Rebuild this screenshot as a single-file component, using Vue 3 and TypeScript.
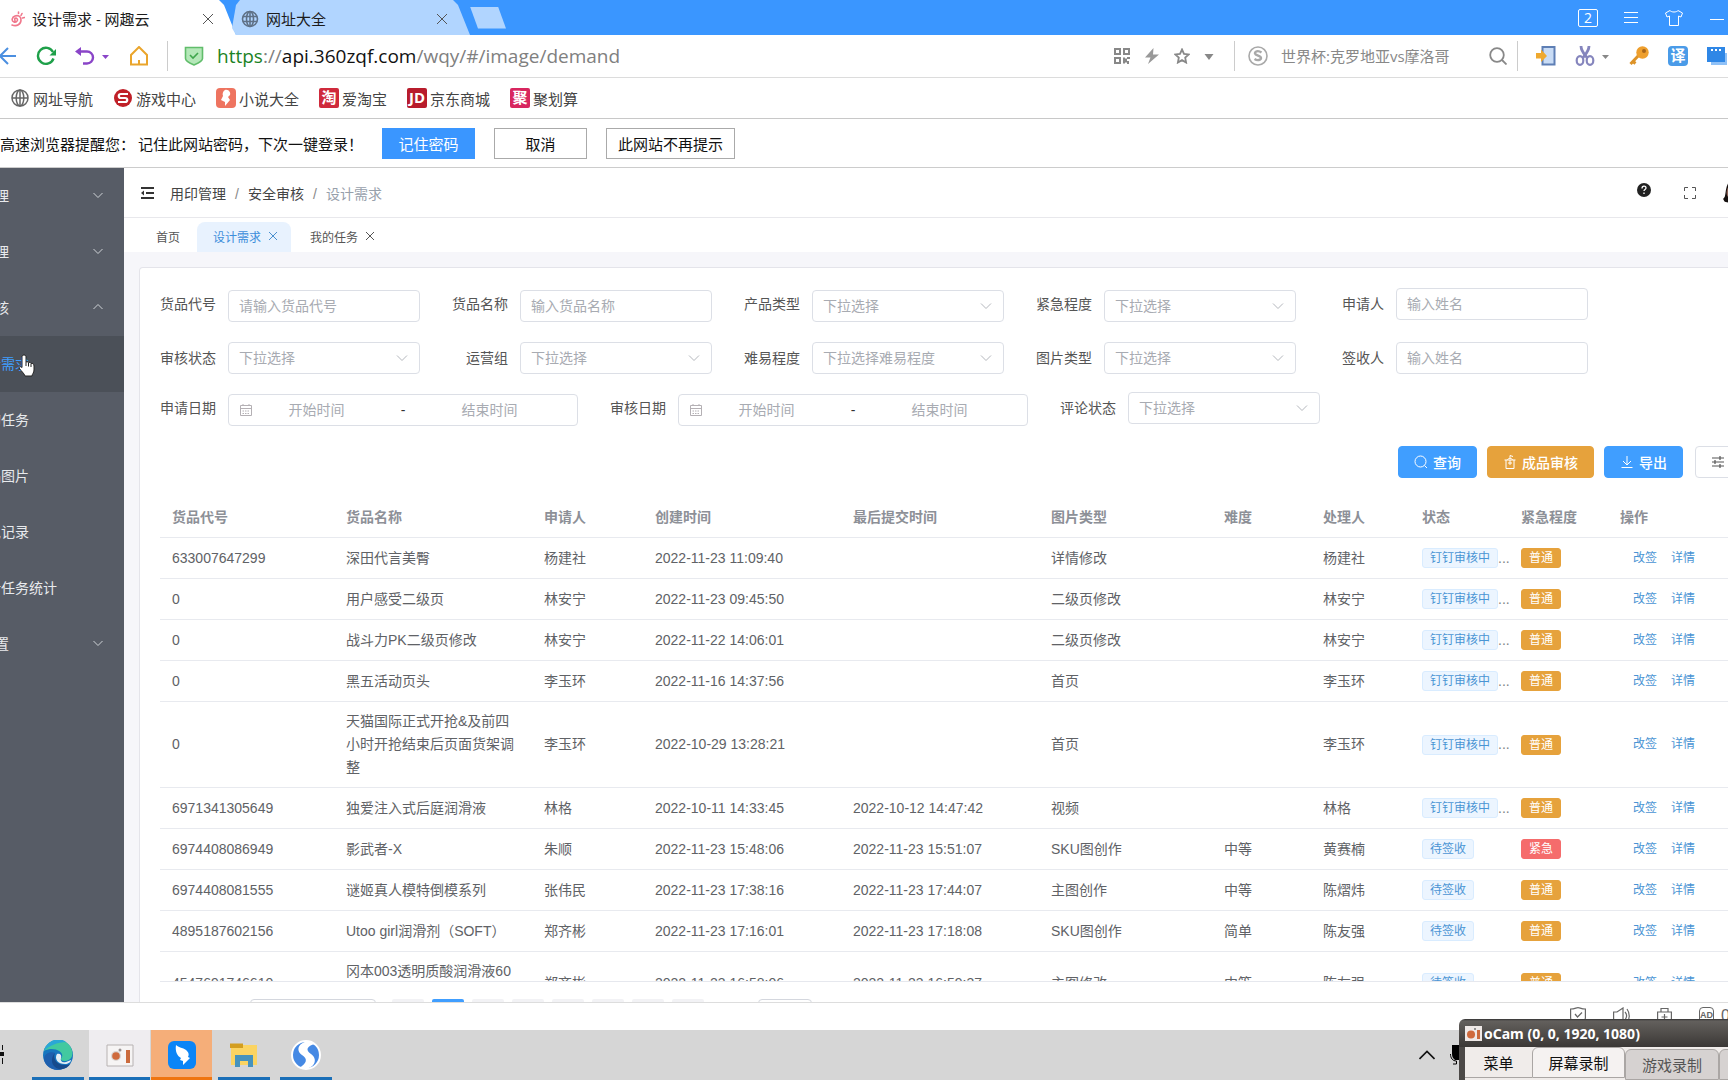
<script setup lang="ts">
interface Row {
  code: string
  name: string
  applicant: string
  created: string
  submitted: string
  kind: string
  level: string
  handler: string
  status: string
  urgent?: boolean
}

interface Field {
  id: string
  label: string
  hint: string
  type: 'input' | 'select' | 'range'
  low?: boolean
}

const bookmarks = [
  { icon: 'globe', text: '网址导航' },
  { icon: 'game', text: '游戏中心' },
  { icon: 'novel', text: '小说大全' },
  { icon: 'tao', text: '爱淘宝' },
  { icon: 'jd', text: '京东商城' },
  { icon: 'ju', text: '聚划算' },
]

const menu = [
  { text: '系统管理', kind: 'group', open: false },
  { text: '用印管理', kind: 'group', open: false },
  { text: '安全审核', kind: 'group', open: true },
  { text: '设计需求', kind: 'active' },
  { text: '我的任务', kind: 'sub' },
  { text: '成品图片', kind: 'sub' },
  { text: '意见记录', kind: 'sub' },
  { text: '设计任务统计', kind: 'sub' },
  { text: '系统设置', kind: 'group', open: false },
]

const fieldRows: Field[][] = [
  [
    { id: 'code', label: '货品代号', hint: '请输入货品代号', type: 'input', low: true },
    { id: 'name', label: '货品名称', hint: '输入货品名称', type: 'input', low: true },
    { id: 'ptype', label: '产品类型', hint: '下拉选择', type: 'select', low: true },
    { id: 'urgency', label: '紧急程度', hint: '下拉选择', type: 'select', low: true },
    { id: 'applicant', label: '申请人', hint: '输入姓名', type: 'input' },
  ],
  [
    { id: 'state', label: '审核状态', hint: '下拉选择', type: 'select' },
    { id: 'team', label: '运营组', hint: '下拉选择', type: 'select' },
    { id: 'level', label: '难易程度', hint: '下拉选择难易程度', type: 'select' },
    { id: 'itype', label: '图片类型', hint: '下拉选择', type: 'select' },
    { id: 'signer', label: '签收人', hint: '输入姓名', type: 'input' },
  ],
  [
    { id: 'applyDate', label: '申请日期', hint: '', type: 'range', low: true },
    { id: 'auditDate', label: '审核日期', hint: '', type: 'range', low: true },
    { id: 'comment', label: '评论状态', hint: '下拉选择', type: 'select' },
  ],
]

const heads = ['货品代号', '货品名称', '申请人', '创建时间', '最后提交时间', '图片类型', '难度', '处理人', '状态', '紧急程度', '操作']

const ding = '钉钉审核中'
const wait = '待签收'
const rows: Row[] = [
  { code: '633007647299', name: '深田代言美臀', applicant: '杨建社', created: '2022-11-23 11:09:40', submitted: '', kind: '详情修改', level: '', handler: '杨建社', status: ding },
  { code: '0', name: '用户感受二级页', applicant: '林安宁', created: '2022-11-23 09:45:50', submitted: '', kind: '二级页修改', level: '', handler: '林安宁', status: ding },
  { code: '0', name: '战斗力PK二级页修改', applicant: '林安宁', created: '2022-11-22 14:06:01', submitted: '', kind: '二级页修改', level: '', handler: '林安宁', status: ding },
  { code: '0', name: '黑五活动页头', applicant: '李玉环', created: '2022-11-16 14:37:56', submitted: '', kind: '首页', level: '', handler: '李玉环', status: ding },
  { code: '0', name: '天猫国际正式开抢&及前四小时开抢结束后页面货架调整', applicant: '李玉环', created: '2022-10-29 13:28:21', submitted: '', kind: '首页', level: '', handler: '李玉环', status: ding },
  { code: '6971341305649', name: '独爱注入式后庭润滑液', applicant: '林格', created: '2022-10-11 14:33:45', submitted: '2022-10-12 14:47:42', kind: '视频', level: '', handler: '林格', status: ding },
  { code: '6974408086949', name: '影武者-X', applicant: '朱顺', created: '2022-11-23 15:48:06', submitted: '2022-11-23 15:51:07', kind: 'SKU图创作', level: '中等', handler: '黄赛楠', status: wait, urgent: true },
  { code: '6974408081555', name: '谜姬真人模特倒模系列', applicant: '张伟民', created: '2022-11-23 17:38:16', submitted: '2022-11-23 17:44:07', kind: '主图创作', level: '中等', handler: '陈熠炜', status: wait },
  { code: '4895187602156', name: 'Utoo girl润滑剂（SOFT）', applicant: '郑齐彬', created: '2022-11-23 17:16:01', submitted: '2022-11-23 17:18:08', kind: 'SKU图创作', level: '简单', handler: '陈友强', status: wait },
  { code: '4547691746610', name: '冈本003透明质酸润滑液60ml', applicant: '郑齐彬', created: '2022-11-23 16:58:06', submitted: '2022-11-23 16:59:37', kind: '主图修改', level: '中等', handler: '陈友强', status: wait },
]

const pages = [1, 2, 3, 4, 5, 6]
</script>

<template>
  <div class="screen">
    <header class="titlebar">
      <div class="tab tab-on">
        <svg class="i16" viewBox="0 0 16 16" fill="none" stroke="#f0788c" stroke-width="1.600" stroke-linecap="round"><path d="M3 14c5 2 9-1 9-5S9 4 6 5 2 10 5 11s5-3 2-4c-2 0-1 2-1 3M12 4.500l1-2M13.500 7l2-.5M9.500 2.500V1" /></svg>
        <span class="tab-text">设计需求 - 网趣云</span>
        <button class="bare" aria-label="关闭标签"><svg class="i12" viewBox="0 0 12 12" stroke="#555"><path d="M1 1l10 10M11 1L1 11" /></svg></button>
      </div>
      <div class="tab tab-off">
        <svg class="i18" viewBox="0 0 18 18" fill="none" stroke="#5f7186" stroke-width="1.600"><circle cx="9" cy="9" r="7.500" /><ellipse cx="9" cy="9" rx="3.500" ry="7.500" /><path d="M2 6.500h14M2 11.500h14M9 1.500v15" /></svg>
        <span class="tab-text">网址大全</span>
        <button class="bare" aria-label="关闭标签"><svg class="i12" viewBox="0 0 12 12" stroke="#555"><path d="M1 1l10 10M11 1L1 11" /></svg></button>
      </div>
      <button class="new-tab" aria-label="新标签"></button>
      <div class="win">
        <span class="count">2</span>
        <svg width="14" height="14" viewBox="0 0 14 14" stroke="#fff"><path d="M0 1.500h14M0 6.500h14M0 11.500h14" /></svg>
        <svg width="20" height="18" viewBox="0 0 20 18" fill="none" stroke="#fff"><path d="M6 1.500L1.500 4l1.500 4 2.500-1v9.500h9V7l2.500 1 1.500-4L14 1.500c-1.500 2-6.500 2-8 0z" /></svg>
        <svg width="18" height="14" viewBox="0 0 18 14" stroke="#fff"><path d="M0 8.500h14" /></svg>
      </div>
    </header>

    <div class="address">
      <div class="nav">
        <svg width="17" height="20" viewBox="0 0 17 20" fill="none" stroke="#4b8fe0" stroke-width="2"><path d="M0 10h16M8 2L0 10l8 8" /></svg>
        <svg class="i20" viewBox="0 0 20 20" fill="none" stroke="#1fa04a" stroke-width="2.400"><path d="M17.500 12.500A8 8 0 1 1 17 6" /><path d="M20 3v6.500h-6.500z" fill="#1fa04a" stroke="none" /></svg>
        <span class="pair">
          <svg class="i20" viewBox="0 0 20 20" fill="none" stroke="#8a45c8" stroke-width="2.400"><path d="M3 5.500h9a6 6 0 0 1 0 12H8" /><path d="M0 5.500L6 1v9z" fill="#8a45c8" stroke="none" /></svg>
          <svg class="caret" viewBox="0 0 9 9" fill="#8a45c8"><path d="M1 3h7L4.500 7z" /></svg>
        </span>
        <svg class="i20" viewBox="0 0 20 20" fill="none" stroke="#eaa52c" stroke-width="2"><path d="M2 18.500V9l8-8 8 8v9.500zM10 18v-4" /></svg>
      </div>
      <div class="url">
        <svg class="i20" viewBox="0 0 20 20" fill="#b5e8b9" stroke="#61bd6b" stroke-width="1.600"><path d="M1.500 1.500h17v11c0 3-5 5-8.500 6.500C6.500 17.500 1.500 15.500 1.500 12.500z" /><path d="M6 9l3 3 5-5" fill="none" stroke="#3fa64c" /></svg>
        <span class="link"><span class="safe">https</span>://<span class="host">api.360zqf.com</span>/wqy/#/image/demand</span>
      </div>
      <div class="url-tools">
        <svg class="i16" viewBox="0 0 16 16" fill="none" stroke="#888" stroke-width="2"><path d="M1 1h5v5H1zM10 1h5v5h-5zM1 10h5v5H1zM10 9.500v2h2v2h-2v2M13 10h3M14 13v3" /></svg>
        <svg class="i16" viewBox="0 0 16 16" fill="#999"><path d="M9.500 0L1 9.500h5.500L4 16 15 6.500H9z" /></svg>
        <svg class="i16" viewBox="0 0 16 16" fill="none" stroke="#888" stroke-width="1.800"><path d="M8 1.500l2 4.300 4.700.6-3.500 3.200.9 4.900L8 12.100l-4.100 2.400.9-4.900L1.300 6.400 6 5.800z" /></svg>
        <svg class="caret big" viewBox="0 0 9 9" fill="#888"><path d="M0 2h9L4.500 8z" /></svg>
      </div>
      <div class="search">
        <svg class="i20" viewBox="0 0 20 20" fill="none" stroke="#a9a9a9"><circle cx="10" cy="10" r="9" stroke-width="1.600" /><path d="M13.500 6.500C10 4 6.500 5.500 7 7.500c.5 2.500 6 2 6 4.500 0 2-3.500 3-6.500 1" stroke-width="2.400" /></svg>
        <input class="search-input" aria-label="搜索" placeholder="世界杯:克罗地亚vs摩洛哥" />
        <svg class="i18" viewBox="0 0 18 18" fill="none" stroke="#888" stroke-width="1.800"><circle cx="8" cy="8" r="6.800" /><path d="M13 13l4.500 4.500" /></svg>
      </div>
      <div class="tools">
        <svg class="i20" viewBox="0 0 20 20"><path d="M6.500 1h12v17.500h-12z" fill="#c9dcf5" stroke="#5e7fb5" stroke-width="2" /><path d="M0 7h5V3.500l6 6.500-6 6v-3.500H0z" fill="#efa92f" /></svg>
        <span class="pair">
          <svg class="i20" viewBox="0 0 20 20" fill="none" stroke="#8585bd" stroke-width="2.200"><path d="M6 0c0 5 3 8 6 11.500M14 0c0 5-3 8-6 11.500" stroke-width="2.800" /><ellipse cx="5" cy="14.500" rx="3.300" ry="4.300" /><ellipse cx="15" cy="14.500" rx="3.300" ry="4.300" /></svg>
          <svg class="caret" viewBox="0 0 9 9" fill="#888"><path d="M1 3h7L4.500 7z" /></svg>
        </span>
        <svg class="i20" viewBox="0 0 20 20"><path d="M10 9L1.500 18M4 15.500l2.500 2" stroke="#dd9328" stroke-width="3" /><circle cx="13.500" cy="6.500" r="6.200" fill="#ee9f2d" /><circle cx="15" cy="5" r="2" fill="#a8661a" /></svg>
        <span class="badge-icon translate">译</span>
        <svg class="i20" viewBox="0 0 20 20"><path d="M4 7h16v12H4z" fill="#8fc1f7" /><path d="M0 1h18v15H0z" fill="#2f87e6" /><path d="M4 4h2M8 4h2M12 4h2" stroke="#fff" stroke-width="2" /></svg>
      </div>
    </div>

    <nav class="bookmarks">
      <a v-for="b in bookmarks" :key="b.text" href="#">
        <svg v-if="b.icon === 'globe'" class="i20" viewBox="0 0 20 20" fill="none" stroke="#666" stroke-width="1.500"><circle cx="10" cy="10" r="8" /><ellipse cx="10" cy="10" rx="3.800" ry="8" /><path d="M2 10h16M10 2v16" /></svg>
        <svg v-else-if="b.icon === 'game'" class="i20" viewBox="0 0 20 20" fill="none"><circle cx="10" cy="10" r="9" fill="#c02028" /><path d="M15 6H8c-3 0-3 4 0 4h4c3 0 3 4 0 4H5" stroke="#fff" stroke-width="2.200" /></svg>
        <svg v-else-if="b.icon === 'novel'" class="i20" viewBox="0 0 20 20"><rect width="20" height="20" rx="4" fill="#ee7460" /><path d="M9 2c4-1 6 3 5 5l-2 2 2 3-5 6v-4l-4-2 2-4c-1-2 0-5 2-6z" fill="#fff" /></svg>
        <span v-else-if="b.icon === 'tao'" class="badge-icon tao">淘</span>
        <span v-else-if="b.icon === 'jd'" class="badge-icon jd">JD</span>
        <span v-else class="badge-icon ju">聚</span>
        {{ b.text }}
      </a>
    </nav>

    <div class="notice">
      <span class="notice-lead">高速浏览器提醒您：</span>
      <span class="notice-text">记住此网站密码，下次一键登录！</span>
      <button class="nbtn primary">记住密码</button>
      <button class="nbtn">取消</button>
      <button class="nbtn wide">此网站不再提示</button>
    </div>

    <div class="page">
      <aside class="side">
        <a v-for="m in menu" :key="m.text" href="#" class="side-item" :class="m.kind">
          <span>{{ m.text }}</span>
          <svg v-if="m.kind === 'group'" width="10" height="10" viewBox="0 0 10 10" fill="none" stroke="#cfd2d6"><path :d="m.open ? 'M.5 7L5 2.500 9.500 7' : 'M.5 3L5 7.500 9.500 3'" /></svg>
        </a>
      </aside>

      <main class="main">
        <div class="topbar">
          <svg width="13" height="12" viewBox="0 0 13 12" stroke="#333" stroke-width="2"><path d="M0 1h13M5 6h8M0 11h13" /><path d="M0 6l3-2.500v5z" fill="#333" stroke="none" /></svg>
          <div class="crumbs">
            <a href="#">用印管理</a><i>/</i><a href="#">安全审核</a><i>/</i><span>设计需求</span>
          </div>
          <div class="top-right">
            <svg class="help" width="14" height="14" viewBox="0 0 14 14"><circle cx="7" cy="7" r="7" fill="#222" /><path d="M5 5.500c0-3 4-3 4-.5 0 1.500-2 1.500-2 3M7 9.500v1.500" fill="none" stroke="#fff" stroke-width="1.300" /></svg>
            <svg width="12" height="12" viewBox="0 0 12 12" fill="none" stroke="#555"><path d="M.5 4V.5H4M8 .5h3.500V4M11.500 8v3.500H8M4 11.500H.5V8" /></svg>
            <svg class="avatar" width="32" height="32" viewBox="0 0 32 32"><path d="M10 3C4 5 4 14 3 19c-1 3-3 3-3 5 8 3 24 3 32 0V3z" fill="#15100f" /><path d="M7 9c-3 4-3 9-1 11h14V7z" fill="#8d6257" /></svg>
          </div>
        </div>
        <div class="tags">
          <a href="#" class="tagtab">首页</a>
          <a href="#" class="tagtab on">设计需求<svg width="8" height="8" viewBox="0 0 8 8" stroke="#4a90cf"><path d="M0 0l8 8M8 0L0 8" /></svg></a>
          <a href="#" class="tagtab">我的任务<svg width="8" height="8" viewBox="0 0 8 8" stroke="#555"><path d="M0 0l8 8M8 0L0 8" /></svg></a>
        </div>

        <div class="canvas">
          <section class="card">
            <form class="filters" @submit.prevent>
              <div v-for="(line, n) in fieldRows" :key="n" class="line">
                <div v-for="f in line" :key="f.id" class="field" :class="{ low: f.low }">
                  <label :for="f.id">{{ f.label }}</label>
                  <div class="control">
                    <input v-if="f.type === 'input'" :id="f.id" class="box" :placeholder="f.hint" />
                    <div v-else-if="f.type === 'select'" class="select">
                      <select :id="f.id" class="box"><option>{{ f.hint }}</option></select>
                      <svg class="arrow" width="12" height="12" viewBox="0 0 12 12" fill="none" stroke="#b4b7bd"><path d="M1 3.500l5 5 5-5" /></svg>
                    </div>
                    <div v-else class="box range">
                      <svg width="14" height="14" viewBox="0 0 14 14" fill="none" stroke="#b4b0b4"><path d="M1.500 2.500h11v10h-11zM1.500 5.500h11M4 1v2M10 1v2" /><path d="M3.500 8h7M3.500 10.500h7" stroke-dasharray="1.500 1" /></svg>
                      <input :id="f.id" placeholder="开始时间" />
                      <span>-</span>
                      <input placeholder="结束时间" aria-label="结束时间" />
                      <b></b>
                    </div>
                  </div>
                </div>
              </div>
            </form>

            <div class="actions">
              <button class="btn blue"><svg width="14" height="14" viewBox="0 0 14 14" fill="none" stroke="#fff"><circle cx="6.500" cy="6.500" r="5.500" /><path d="M10.500 10.500L13 13" /></svg>查询</button>
              <button class="btn gold"><svg width="14" height="14" viewBox="0 0 14 14" fill="none" stroke="#fff"><path d="M1.500 5h11M3 5v8.500h8V5M4.500 5c0-2 5-2 5 0M7 3V.5l3 1M7 5v5M5 8h4" /></svg>成品审核</button>
              <button class="btn blue"><svg width="14" height="14" viewBox="0 0 14 14" fill="none" stroke="#fff"><path d="M7 1v9M3 6l4 4 4-4M1.500 12.500h11" /></svg>导出</button>
              <button class="btn plain" aria-label="列设置"><svg width="14" height="14" viewBox="0 0 14 14" stroke="#555"><path d="M1 3h12M1 7h12M1 11h12M9 1v4M4 5v4M9 9v4" stroke-width="1.200" /></svg></button>
            </div>

            <div class="table-wrap">
              <table>
                <colgroup>
                  <col class="w174" /><col class="w198" /><col class="w111" /><col class="w198" /><col class="w198" /><col class="w173" />
                  <col class="w99" /><col class="w99" /><col class="w99" /><col class="w99" /><col />
                </colgroup>
                <thead>
                  <tr><th v-for="h in heads" :key="h">{{ h }}</th></tr>
                </thead>
                <tbody>
                  <tr v-for="(r, i) in rows" :key="i">
                    <td>{{ r.code }}</td>
                    <td>{{ r.name }}</td>
                    <td>{{ r.applicant }}</td>
                    <td>{{ r.created }}</td>
                    <td>{{ r.submitted }}</td>
                    <td>{{ r.kind }}</td>
                    <td>{{ r.level }}</td>
                    <td>{{ r.handler }}</td>
                    <td class="state"><div><span class="chip">{{ r.status }}</span><span v-if="r.status === ding" class="more">...</span></div></td>
                    <td><div><span class="chip solid" :class="{ red: r.urgent }">{{ r.urgent ? '紧急' : '普通' }}</span></div></td>
                    <td class="ops"><div><a href="#">改签</a><a href="#">详情</a></div></td>
                  </tr>
                </tbody>
              </table>
            </div>

            <div class="pager">
              <select aria-label="每页条数"><option>10条/页</option></select>
              <button aria-label="上一页">‹</button>
              <button v-for="p in pages" :key="p" :class="{ current: p === 1 }">{{ p }}</button>
              <button aria-label="下一页">›</button>
              <input aria-label="前往页" />
            </div>
          </section>
        </div>
      </main>
    </div>

    <div class="statusbar">
      <svg width="16" height="18" viewBox="0 0 16 18" fill="none" stroke="#666" stroke-width="1.200"><path d="M.6 2C5 2 6 .6 8 .6S11 2 15.400 2v9c0 3-4 4-7.400 6C4.600 15 .6 14 .6 11z" /><path d="M5 7l2.500 3L12 5.500" /></svg>
      <svg width="17" height="18" viewBox="0 0 17 18" fill="none" stroke="#666" stroke-width="1.200"><path d="M.6 5H4l6-4v16l-6-4H.6zM12 5c2 2 2 5 0 8M14 2c3 4 3 10 0 14" /></svg>
      <svg width="15" height="18" viewBox="0 0 15 18" fill="none" stroke="#666" stroke-width="1.200"><path d="M.6 5h13.800v12H.6zM4 5V1.500h7V5M7.500 7v6M4.500 10h6" /></svg>
      <span class="ad">AD</span>
      <span class="zero">0</span>
    </div>

    <footer class="taskbar">
      <svg class="task-view" width="27" height="20" viewBox="0 0 27 20"><path d="M0 7h4v4H0zM2 0h1v5H2zM2 13h1v6H2z" fill="#111" /></svg>
      <button class="app" aria-label="Edge">
        <svg width="30" height="30" viewBox="0 0 30 30"><circle cx="15" cy="15" r="15" fill="#1776bf" /><path d="M1 11C4-1 20-4 27 6c5 8 2 15-6 15-3 0-4-2-2-4 2-6-9-11-18-6z" fill="#42c9a0" /><path d="M1 11C4-1 17-3 23 2c-8 0-18 4-22 9z" fill="#2ba7d6" /><path d="M12 13c-4 6 0 15 7 16-8 3-17-2-18-10 0-6 7-8 11-6z" fill="#1e5fae" /><path d="M12 13c-3 6 3 13 11 12 2 0 4-1 5-2-3 5-8 7-12 6-8-2-9-11-4-16z" fill="#174a8c" /><path d="M14 14c3-1 5 1 4 4s1 5 5 4l5-2c0 2-3 4-6 4-7 0-11-5-8-10z" fill="#e4eef5" /></svg>
      </button>
      <button class="app open" aria-label="oCam">
        <svg width="28" height="24" viewBox="0 0 28 24"><path d="M1 2h26v21H1z" fill="#f6f4f4" stroke="#b7b2b2" /><circle cx="10" cy="13" r="5" fill="#d9d4d2" /><circle cx="10" cy="13" r="3.800" fill="#cf6a3c" /><circle cx="14" cy="7" r="1.500" fill="#9a9393" /><path d="M20 7h4v13h-4z" fill="#cb6b3d" /></svg>
      </button>
      <button class="app alert" aria-label="钉钉">
        <svg width="28" height="28" viewBox="0 0 28 28"><rect width="28" height="28" rx="6" fill="#0b85f7" /><path d="M8 4c3 3 9 3 11 6 2 2 2 4 1 6l2 1-7 7v-4l-3-1 1-2c-4-2-6-7-5-13z" fill="#fff" /></svg>
      </button>
      <button class="app" aria-label="文件资源管理器">
        <svg width="28" height="26" viewBox="0 0 28 26"><path d="M1 3h26v20H1z" fill="#fbd462" /><path d="M0 1.500h13V6H0z" fill="#d39e20" /><path d="M5 25V13h18v12h-5v-6h-8v6z" fill="#4793bd" /></svg>
      </button>
      <button class="app" aria-label="浏览器">
        <svg width="30" height="30" viewBox="0 0 30 30"><circle cx="15" cy="15" r="14" fill="#4589e4" stroke="#fff" stroke-width="2" /><path d="M18 1C8 2 4 10 11 15c6 4 5 8-3 13l7 1c9-2 12-10 5-15-6-4-4-8 4-10z" fill="#fff" /></svg>
      </button>
      <div class="tray">
        <svg width="16" height="10" viewBox="0 0 16 10" fill="none" stroke="#111" stroke-width="1.600"><path d="M.5 9L8 1.500 15.500 9" /></svg>
        <svg width="16" height="20" viewBox="0 0 16 20"><path d="M2 0h12v15H5c-2-2-3-3-3-6z" fill="#000" /><path d="M.5 9c0 4 2 7 6 7v3H3" fill="none" stroke="#000" /></svg>
      </div>
    </footer>

    <svg class="pointer" width="18" height="24" viewBox="0 0 18 24"><path d="M6 1c1.500 0 2 .8 2 2v5c1-.5 2 0 2.500.6 1-.5 2 0 2.500.8 1.500-.3 3 .5 3 2.600v4c0 3-2 4-2 6H7c-1-3-4-5-6-8 0-1.500 1.500-2 3-.5V3c0-1.200.6-2 2-2z" fill="#fff" stroke="#222" /><path d="M8 8v4M10.500 9v3.500M13 10v3" stroke="#222" /></svg>

    <div class="ocam">
      <div class="ocam-title">
        <svg width="17" height="15" viewBox="0 0 17 15"><path d="M0 0h17v15H0z" fill="#efe9e7" /><circle cx="6" cy="8.500" r="4" fill="#cf6a3c" /><circle cx="10" cy="3" r="1" fill="#777" /><path d="M12 4h3v9h-3z" fill="#cb6b3d" /></svg>
        <span>oCam (0, 0, 1920, 1080)</span>
      </div>
      <div class="ocam-tabs">
        <button class="menu">菜单</button>
        <button class="on">屏幕录制</button>
        <button>游戏录制</button>
        <button aria-label="更多"></button>
      </div>
    </div>
  </div>
</template>

<style>
html,
body {
  margin: 0;
  overflow: hidden;
}
</style>

<style scoped>
* {
  box-sizing: border-box;
}
.screen {
  position: relative;
  display: flex;
  flex-direction: column;
  height: 100vh;
  overflow: hidden;
  background: #fff;
  color: #606266;
  font-family: "Liberation Sans", "Noto Sans CJK SC", sans-serif;
  font-size: 14px;
}
svg {
  display: block;
  flex: none;
}
a {
  color: inherit;
  text-decoration: none;
}
button,
input,
select {
  font: inherit;
  color: inherit;
  margin: 0;
}
button {
  padding: 0;
  border: 0;
  background: none;
}
.i12 { width: 12px; height: 12px; }
.i16 { width: 16px; height: 16px; }
.i18 { width: 18px; height: 18px; }
.i20 { width: 20px; height: 20px; }

.titlebar,
.bookmarks,
.notice,
.address {
  flex: none;
  display: flex;
  align-items: center;
  font-family: "Open Sans", "Noto Sans CJK SC", sans-serif;
  font-size: 15px;
}
.titlebar {
  height: 35px;
  background: #3a96ff;
}
.tab {
  display: flex;
  align-items: center;
  gap: 7px;
  height: 35px;
  color: #1c1c1c;
}
.tab-text {
  flex: 1;
  white-space: nowrap;
}
.tab-on {
  width: 236px;
  padding: 2px 22px 0 9px;
  background: #fff;
  clip-path: polygon(0 0, 219px 0, 224px 5px, 236px 100%, 0 100%);
}
.tab-off {
  width: 238px;
  margin-left: -4px;
  padding: 2px 22px 0 9px;
  background: #b1d5ff;
  clip-path: polygon(4px 100%, 0 80%, 4px 5px, 8px 0, 221px 0, 226px 5px, 238px 100%);
}
.new-tab {
  width: 36px;
  height: 22px;
  background: #b1d5ff;
  clip-path: polygon(0 0, 28px 0, 36px 100%, 8px 100%);
}
.win {
  display: flex;
  align-items: center;
  gap: 26px;
  margin-left: auto;
}
.count {
  width: 20px;
  height: 18px;
  border: 1px solid #fff;
  border-radius: 2px;
  color: #fff;
  font-size: 14px;
  line-height: 16px;
  text-align: center;
}

.address {
  height: 43px;
  border-bottom: 1px solid #dcdcdc;
}
.nav {
  display: flex;
  align-items: center;
  gap: 19px;
  height: 30px;
  padding-right: 18px;
  border-right: 1px solid #ccc;
}
.pair {
  display: flex;
  align-items: center;
  gap: 6px;
}
.caret {
  width: 9px;
  height: 9px;
}
.caret.big {
  width: 10px;
}
.url {
  flex: 1;
  min-width: 0;
  display: flex;
  align-items: center;
  gap: 13px;
  padding-left: 16px;
}
.link {
  color: #808080;
  font-size: 19px;
  white-space: nowrap;
}
.safe { color: #1c8224; }
.host { color: #111; }
.url-tools {
  display: flex;
  align-items: center;
  gap: 14px;
  padding-right: 20px;
}
.search {
  display: flex;
  align-items: center;
  width: 284px;
  height: 30px;
  padding: 0 10px 0 13px;
  border: solid #ccc;
  border-width: 0 1px;
}
.search-input {
  flex: 1;
  min-width: 0;
  padding: 0 0 0 13px;
  border: 0;
  outline: 0;
  background: none;
}
.search-input::placeholder {
  color: #888;
}
.tools {
  display: flex;
  align-items: center;
  gap: 19px;
  width: 210px;
  padding-left: 18px;
  overflow: hidden;
}
.badge-icon {
  flex: none;
  width: 20px;
  height: 20px;
  border-radius: 2px;
  color: #fff;
  font-weight: 700;
  font-size: 15px;
  line-height: 19px;
  text-align: center;
}
.translate { background: #4a9be8; border-radius: 4px; }
.tao { background: #cf2a3c; }
.jd { background: #b81c2c; }
.ju { background: #d8265f; }

.bookmarks {
  gap: 20px;
  height: 41px;
  padding: 0 0 0 10px;
  border-bottom: 1px solid #c8c8c8;
  color: #444;
}
.bookmarks a {
  display: flex;
  align-items: center;
  gap: 3px;
  white-space: nowrap;
}

.notice {
  height: 49px;
  border-bottom: 1px solid #ccc;
  color: #111;
  white-space: nowrap;
}
.notice-lead {
  width: 138px;
}
.notice-text {
  width: 244px;
}
.nbtn {
  width: 93px;
  height: 31px;
  margin-right: 19px;
  border: 1px solid #aaa;
  background: #fff;
}
.nbtn.primary {
  border-color: #3a96ff;
  background: #3a96ff;
  color: #fff;
}
.nbtn.wide {
  width: 129px;
}

.page {
  flex: 1;
  min-height: 0;
  display: flex;
  border-bottom: 1px solid #ddd;
  overflow: hidden;
}
.side {
  flex: none;
  width: 200px;
  margin-left: -76px;
  background: #575c66;
  color: #e8eaed;
}
.side-item {
  display: flex;
  align-items: center;
  justify-content: space-between;
  height: 56px;
  padding: 0 21px 2px 49px;
}
.side-item.group {
  padding-left: 29px;
}
.side-item.active {
  background: #4b5058;
  color: #409eff;
}
.main {
  flex: 1;
  min-width: 0;
  display: flex;
  flex-direction: column;
  background: #f6f6fa;
}
.topbar {
  flex: none;
  display: flex;
  align-items: center;
  height: 50px;
  padding-left: 17px;
  border-bottom: 1px solid #e8e8ec;
  background: #fff;
  overflow: hidden;
}
.crumbs {
  display: flex;
  align-items: baseline;
  margin-left: 16px;
  color: #444;
}
.crumbs i {
  width: 22px;
  color: #888;
  font-style: normal;
  text-align: center;
}
.crumbs span {
  color: #97a0ab;
}
.top-right {
  display: flex;
  align-items: center;
  gap: 26px;
  margin: 0 -26px 0 auto;
}
.help {
  margin: 0 7px 6px 0;
}
.avatar {
  border-radius: 50%;
}
.tags {
  flex: none;
  display: flex;
  align-items: flex-end;
  gap: 3px;
  height: 34px;
  padding-left: 16px;
  background: #fff;
}
.tagtab {
  display: flex;
  align-items: center;
  gap: 8px;
  height: 30px;
  padding: 0 14px 2px 16px;
  border-radius: 8px 8px 0 0;
  color: #555;
  font-size: 12px;
}
.tagtab.on {
  background: #e8f2fe;
  color: #3d8edb;
}
.canvas {
  flex: 1;
  min-height: 0;
  display: flex;
  margin-right: -34px;
  padding: 15px 0 0 15px;
}
.card {
  flex: 1;
  min-width: 0;
  display: flex;
  flex-direction: column;
  padding: 20px 20px 0;
  border: 1px solid #e4e4ea;
  border-bottom: 0;
  border-radius: 4px 4px 0 0;
  background: #fff;
}
.line {
  display: flex;
  gap: 32px;
  margin-bottom: 18px;
}
.field {
  display: flex;
}
.field.low .control {
  padding: 2px 0;
}
.field label {
  width: 68px;
  padding-right: 12px;
  color: #555;
  line-height: 32px;
  text-align: right;
  white-space: nowrap;
}
.box {
  display: block;
  width: 192px;
  height: 32px;
  padding: 0 10px;
  border: 1px solid #dcdfe6;
  border-radius: 4px;
  outline: 0;
  background: #fff;
}
select.box {
  appearance: none;
  color: #a8abb2;
}
input::placeholder {
  color: #a8abb2;
}
.select {
  position: relative;
}
.arrow {
  position: absolute;
  top: 10px;
  right: 12px;
  pointer-events: none;
}
.range {
  display: flex;
  align-items: center;
  width: 350px;
}
.range input {
  flex: 1;
  width: 0;
  padding: 0;
  border: 0;
  outline: 0;
  text-align: center;
}
.range span {
  width: 46px;
  color: #333;
  text-align: center;
}
.range b {
  width: 14px;
}
.actions {
  display: flex;
  justify-content: flex-end;
  gap: 10px;
  margin-bottom: 18px;
}
.btn {
  display: flex;
  align-items: center;
  gap: 5px;
  height: 32px;
  padding: 0 15px;
  border: 1px solid #dcdfe6;
  border-radius: 4px;
  color: #fff;
  font-weight: 500;
}
.btn.blue {
  border-color: #409eff;
  background: #409eff;
}
.btn.gold {
  border-color: #e6a23c;
  background: #e6a23c;
}
.btn.plain {
  margin-left: 2px;
}
.table-wrap {
  flex: 1;
  min-height: 0;
  overflow: hidden;
  border-bottom: 1px solid #e6e8ee;
}
table {
  width: 100%;
  table-layout: fixed;
  border-collapse: separate;
  border-spacing: 0;
}
.w174 { width: 174px; }
.w198 { width: 198px; }
.w111 { width: 111px; }
.w173 { width: 173px; }
.w99 { width: 99px; }
th,
td {
  height: 41px;
  padding: 8px 12px;
  border-bottom: 1px solid #e8eaef;
  line-height: 23px;
  text-align: left;
  vertical-align: middle;
  word-break: break-all;
}
th {
  height: 42px;
  padding: 10px 12px 8px;
  color: #8d9097;
  font-weight: 700;
}
td div {
  display: flex;
  align-items: center;
  height: 23px;
}
td.state {
  padding-right: 0;
}
.chip {
  height: 20px;
  padding: 0 7px;
  border: 1px solid #d9ecff;
  border-radius: 3px;
  background: #ecf5ff;
  color: #4a94d4;
  font-size: 12px;
  line-height: 18px;
  white-space: nowrap;
}
.chip.solid {
  border-color: #e6a23c;
  background: #e6a23c;
  color: #fff;
}
.chip.solid.red {
  border-color: #f56c6c;
  background: #f56c6c;
}
.more {
  color: #808488;
}
td.ops div {
  gap: 14px;
  padding-left: 13px;
  color: #4a94d4;
  font-size: 12px;
}
.pager {
  flex: none;
  display: flex;
  align-items: flex-start;
  gap: 8px;
  height: 20px;
  padding: 17px 0 0 90px;
  overflow: hidden;
}
.pager select,
.pager input {
  height: 32px;
  border: 1px solid #d4d7de;
  border-radius: 4px;
  background: #fff;
}
.pager select {
  width: 126px;
  margin-right: 8px;
}
.pager input {
  width: 54px;
  margin-left: 46px;
}
.pager button {
  width: 32px;
  height: 32px;
  border-radius: 2px;
  background: #f2f2f5;
}
.pager .current {
  background: #409eff;
  color: #fff;
}

.statusbar {
  flex: none;
  display: flex;
  justify-content: flex-end;
  align-items: flex-start;
  gap: 27px;
  height: 27px;
  margin-right: -2px;
  padding-top: 4px;
  color: #666;
}
.ad {
  width: 15px;
  height: 18px;
  border: 1px solid #666;
  border-radius: 4px;
  font-size: 9px;
  font-weight: 700;
  line-height: 15px;
  text-align: center;
}
.zero {
  margin-left: -20px;
  font-size: 16px;
  line-height: 17px;
}

.taskbar {
  flex: none;
  display: flex;
  align-items: center;
  height: 50px;
  background: #d6d6d6;
}
.app {
  position: relative;
  display: flex;
  align-items: center;
  justify-content: center;
  width: 62px;
  height: 50px;
}
.app::after {
  content: "";
  position: absolute;
  right: 5px;
  bottom: 0;
  left: 5px;
  height: 3px;
  background: #1a6fb8;
}
.app.open,
.app.alert {
  border-right: 1px solid #d6d6d6;
}
.app.open {
  background: #efedf0;
}
.app.alert {
  background: #f5ae79;
}
.app.open::after,
.app.alert::after {
  right: 0;
  left: 0;
}
.app.alert::after {
  background: #ef7510;
}
.tray {
  display: flex;
  align-items: center;
  gap: 15px;
  margin: 0 262px 0 auto;
}

.pointer {
  position: absolute;
  top: 354px;
  left: 18px;
}
.ocam {
  position: absolute;
  right: 0;
  bottom: 0;
  width: 269px;
  height: 61px;
  padding-left: 6px;
  border-radius: 6px 0 0 0;
  background: linear-gradient(#333 0, #63605d 2px, #3b3836 28px, #4c4947 28px);
  overflow: hidden;
}
.ocam-title {
  display: flex;
  align-items: center;
  gap: 2px;
  height: 28px;
  color: #fff;
  font-family: "Noto Sans", sans-serif;
  font-size: 14px;
  font-weight: 700;
}
.ocam-tabs {
  display: flex;
  height: 33px;
  background: #f0ecea;
  color: #111;
  font-size: 15px;
}
.ocam-tabs button {
  flex: none;
  width: 94px;
  height: 31px;
  margin-top: 2px;
  border: 1px solid #aaa6a4;
  border-radius: 6px 6px 0 0;
  background: #d6d2d1;
  color: #555;
}
.ocam-tabs .on {
  width: 93px;
  margin-top: 0;
  background: #f5f2f1;
  color: #111;
}
.ocam-tabs .menu {
  width: 67px;
  margin-top: 0;
  border: 0;
  border-bottom: 1px solid #aaa6a4;
  background: none;
  color: #111;
}
</style>
